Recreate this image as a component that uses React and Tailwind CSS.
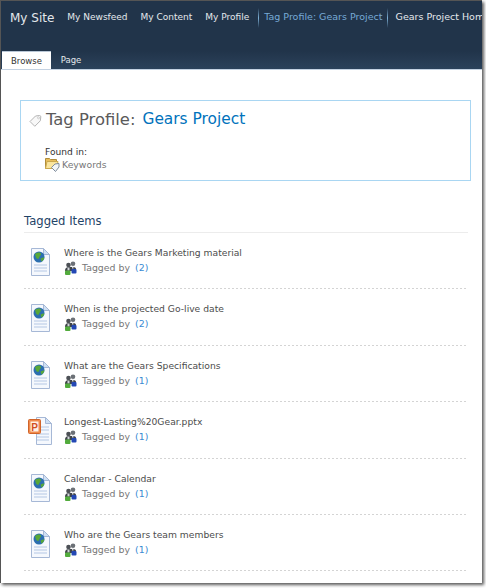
const items = [
  { title: "Where is the Gears Marketing material", count: 2 },
  { title: "When is the projected Go-live date", count: 2 },
  { title: "What are the Gears Specifications", count: 1 },
  { title: "Longest-Lasting%20Gear.pptx", count: 1, ppt: true },
  { title: "Calendar - Calendar", count: 1 },
  { title: "Who are the Gears team members", count: 1 },
];

const font = "font-['DejaVu_Sans','Liberation_Sans',sans-serif]";

const DocIcon = ({ ppt }) => (
  <svg width="26" height="32" viewBox="0 0 26 32" className="block">
    {ppt ? (
      <g>
        <path d="M9.500 3.500h9l6 6v21h-15z" fill="#f5f8fd" stroke="#a6b8d6" />
        <path d="M18.500 3.500v6h6z" fill="#cfe0f4" stroke="#a6b8d6" />
        <path d="M14 13h8M14 16h8M10 20h12M10 23h12M10 26h12" stroke="#b4c7e4" />
        <rect x="1.500" y="5.500" width="12" height="14" rx="1" fill="#f08a4c" stroke="#d0642a" />
        <rect x="3.500" y="7.500" width="8" height="10" fill="#fff2e6" />
        <text x="4.200" y="16.500" fontSize="10" fontWeight="700" fill="#d2501e" fontFamily="Liberation Sans">P</text>
      </g>
    ) : (
      <g>
        <path d="M4.500 3.500h12l6 6v21h-18z" fill="#f5f8fd" stroke="#a6b8d6" />
        <path d="M16.500 3.500v6h6z" fill="#cfe0f4" stroke="#a6b8d6" />
        <path d="M7 20h13M7 23h13M7 26h13" stroke="#b4c7e4" />
        <circle cx="12" cy="12" r="5.500" fill="#2c6fb0" />
        <path d="M8 9c2-1.500 5-2 6-.5.500 1.500-1.500 2.500-2 4.500-.5 1.500-2 1-3-.5z" fill="#58a838" />
        <path d="M13.500 13.500c1-.5 2.500-1 4-1-.5 2-2 3.500-3 4z" fill="#58a838" />
      </g>
    )}
  </svg>
);

const PeopleIcon = () => (
  <svg width="13" height="14" viewBox="0 0 13 14" className="block">
    <circle cx="4.500" cy="4" r="2.300" fill="#4c5055" />
    <circle cx="9" cy="2.800" r="2.300" fill="#6b7076" />
    <path d="M1 10c0-3 1.500-4 3.500-4h4c2 0 3.500.5 3.500 2v2z" fill="#3f4349" />
    <path d="M3.500 6.500h2v3h-2zM8 5.500h1.500v2H8z" fill="#d0d4d8" />
    <rect x="7.500" y="8" width="5" height="4.500" rx="1" fill="#2348b4" />
    <rect x="1" y="9.500" width="5.500" height="4.500" rx="1" fill="#52ab3c" />
  </svg>
);

const TagIcon = () => (
  <svg width="13" height="13" viewBox="0 0 13 13" className="block">
    <path d="M1 7.500l5.500-5.500 4-.5c.8 0 1.300.5 1.300 1.300l-.5 4-5.500 5.500z" fill="#f8f8f8" stroke="#b4b4b4" strokeLinejoin="round" />
    <circle cx="9.500" cy="3.800" r="1" fill="#fff" stroke="#b4b4b4" strokeWidth="0.600" />
  </svg>
);

const FolderTagIcon = () => (
  <svg width="15" height="15" viewBox="0 0 15 15" className="block">
    <path d="M.5 1.500h4l1 1h6v9h-11z" fill="#e8be5c" stroke="#b08c3a" />
    <path d="M2 4.500h11l-1.500 7h-11z" fill="#fae59e" stroke="#cba84e" />
    <path d="M6.500 10.500l3.500-3.500 4-.5v3.500l-3.500 4.500z" fill="#f2f5f8" stroke="#7f8c9c" />
  </svg>
);

const Sep = () => (
  <div className="w-px h-[20px] bg-gradient-to-b from-transparent via-[#7fb2d8] to-transparent shrink-0" />
);

const App = () => {
  return (
    <div className={`w-[486px] h-[588px] overflow-hidden bg-white flex flex-col ${font}`}>
      <div className="w-[482px] h-[583px] overflow-hidden border-l border-t border-[#555] bg-white shadow-[2px_2px_3px_rgba(0,0,0,0.65)] shrink-0">
        {/* Top nav */}
        <div className="h-[69px] bg-[#21344a] flex flex-col justify-between border-b border-[#c4d2e2]">
          <div className="flex items-center h-[33px] whitespace-nowrap text-[9px] text-[#e4e8ec]">
            <span className="text-[12px] ml-[9px] mr-[13px]">My Site</span>
            <span className="mr-[13px]">My Newsfeed</span>
            <span className="mr-[13px]">My Content</span>
            <span className="mr-[9px]">My Profile</span>
            <Sep />
            <span className="text-[#77aad6] text-[9.500px] ml-[5px] mr-[4px]">Tag Profile: Gears Project</span>
            <Sep />
            <span className="ml-[8px] text-[9.500px]">Gears Project Home</span>
          </div>
          <div className="flex items-end h-[18px] bg-gradient-to-b from-[#21344a] to-[#2b425b] text-[8.500px]">
            <div className="ml-[1px] w-[49px] h-[18px] pt-[1px] bg-white border-t border-[#b9c7d6] flex items-center justify-center text-[#333]">
              Browse
            </div>
            <div className="w-[40px] h-[18px] pt-[1px] flex items-center justify-center text-[#e4e8ec]">
              Page
            </div>
          </div>
        </div>

        {/* Tag profile box */}
        <div className="ml-[19px] mr-[11px] mt-[30px] h-[81px] border border-[#a9d6f2] pl-[8px] pt-[9px]">
          <div className="flex items-center h-[20px] text-[16.400px] text-[#5a5a5a] whitespace-nowrap">
            <TagIcon />
            <span className="ml-[4px]">Tag Profile:</span>
            <span className="ml-[7px] text-[15.400px] text-[#0072bc]">Gears Project</span>
          </div>
          <div className="ml-[16px] mt-[16px] text-[9.100px] text-[#333] leading-[12px]">Found in:</div>
          <div className="ml-[16px] -mt-[1px] flex items-center gap-[2px] text-[9.300px] text-[#777]">
            <FolderTagIcon />
            Keywords
          </div>
        </div>

        {/* Tagged items */}
        <div className="ml-[23px] mr-[14px] mt-[32px]">
          <div className="h-[20px] text-[11.600px] leading-[17px] text-[#1f4467] border-b border-[#ececec]">Tagged Items</div>
          {items.map((item) => (
            <div key={item.title}>
              <div className="h-[55.400px] flex pl-[3px] pt-[12px]">
                <div className="w-[37px] shrink-0">
                  <DocIcon ppt={item.ppt} />
                </div>
                <div>
                  <div className="text-[9.200px] leading-[14px] mt-[1px] text-[#4c4c4c] whitespace-nowrap">{item.title}</div>
                  <div className="flex items-center mt-[1px] text-[9.400px] text-[#777] whitespace-nowrap">
                    <PeopleIcon />
                    <span className="ml-[5px]">Tagged by</span>
                    <span className="ml-[5px] text-[#3a8ad2]">({item.count})</span>
                  </div>
                </div>
              </div>
              <div className="h-px bg-[repeating-linear-gradient(90deg,#d4d4d4_0_2px,transparent_2px_4px)]" />
            </div>
          ))}
        </div>
      </div>
    </div>
  );
};

export default App;
